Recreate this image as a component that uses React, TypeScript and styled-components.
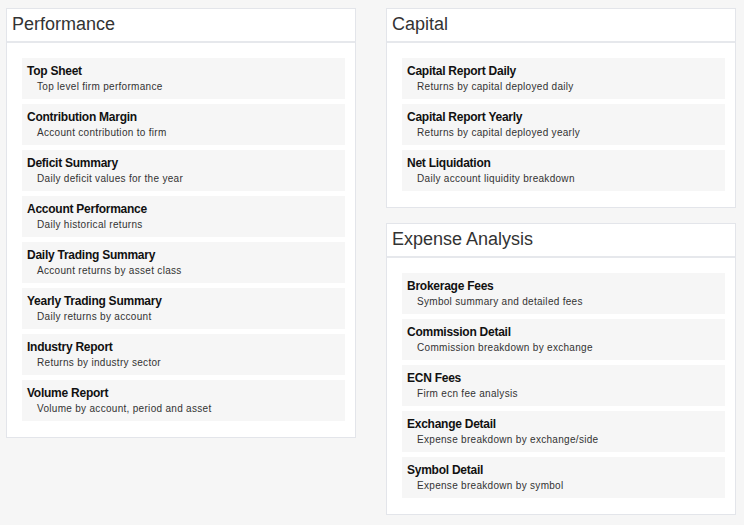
import React from 'react';
import styled, { createGlobalStyle } from 'styled-components';

const GlobalStyle = createGlobalStyle`
  html, body {
    margin: 0;
    padding: 0;
    background: #f6f6f6;
    font-family: "Liberation Sans", Arial, sans-serif;
  }
`;

const Page = styled.div`
  display: grid;
  grid-template-columns: 350px 350px;
  column-gap: 30px;
  align-items: start;
  padding: 8px 0 0 6px;
`;

const Column = styled.div`
  display: flex;
  flex-direction: column;
  gap: 15px;
`;

const Panel = styled.section`
  background: #fff;
  border: 1px solid #e3e5ea;
`;

const PanelHeader = styled.h2`
  margin: 0;
  height: 32px;
  line-height: 31px;
  padding: 0 5px;
  font-size: 18px;
  font-weight: normal;
  color: #333;
  border-bottom: 2px solid #e6e8ec;
`;

const PanelBody = styled.div`
  display: flex;
  flex-direction: column;
  gap: 5px;
  padding: 15px 10px 16px 15px;
`;

const Item = styled.a`
  display: block;
  height: 41px;
  box-sizing: border-box;
  padding: 5px 5px;
  background: #f6f6f6;
  text-decoration: none;
  cursor: pointer;
`;

const ItemTitle = styled.div`
  font-size: 12px;
  line-height: 17px;
  font-weight: bold;
  letter-spacing: -0.25px;
  color: #111;
`;

const ItemDesc = styled.div`
  font-size: 10px;
  line-height: 14px;
  padding-left: 10px;
  letter-spacing: 0.3px;
  color: #333;
`;

type Report = { title: string; desc: string };

const performance: Report[] = [
  { title: 'Top Sheet', desc: 'Top level firm performance' },
  { title: 'Contribution Margin', desc: 'Account contribution to firm' },
  { title: 'Deficit Summary', desc: 'Daily deficit values for the year' },
  { title: 'Account Performance', desc: 'Daily historical returns' },
  { title: 'Daily Trading Summary', desc: 'Account returns by asset class' },
  { title: 'Yearly Trading Summary', desc: 'Daily returns by account' },
  { title: 'Industry Report', desc: 'Returns by industry sector' },
  { title: 'Volume Report', desc: 'Volume by account, period and asset' },
];

const capital: Report[] = [
  { title: 'Capital Report Daily', desc: 'Returns by capital deployed daily' },
  { title: 'Capital Report Yearly', desc: 'Returns by capital deployed yearly' },
  { title: 'Net Liquidation', desc: 'Daily account liquidity breakdown' },
];

const expense: Report[] = [
  { title: 'Brokerage Fees', desc: 'Symbol summary and detailed fees' },
  { title: 'Commission Detail', desc: 'Commission breakdown by exchange' },
  { title: 'ECN Fees', desc: 'Firm ecn fee analysis' },
  { title: 'Exchange Detail', desc: 'Expense breakdown by exchange/side' },
  { title: 'Symbol Detail', desc: 'Expense breakdown by symbol' },
];

function ReportPanel({ heading, reports }: { heading: string; reports: Report[] }) {
  return (
    <Panel>
      <PanelHeader>{heading}</PanelHeader>
      <PanelBody>
        {reports.map((r) => (
          <Item key={r.title}>
            <ItemTitle>{r.title}</ItemTitle>
            <ItemDesc>{r.desc}</ItemDesc>
          </Item>
        ))}
      </PanelBody>
    </Panel>
  );
}

export default function App() {
  return (
    <>
      <GlobalStyle />
      <Page>
        <Column>
          <ReportPanel heading="Performance" reports={performance} />
        </Column>
        <Column>
          <ReportPanel heading="Capital" reports={capital} />
          <ReportPanel heading="Expense Analysis" reports={expense} />
        </Column>
      </Page>
    </>
  );
}
